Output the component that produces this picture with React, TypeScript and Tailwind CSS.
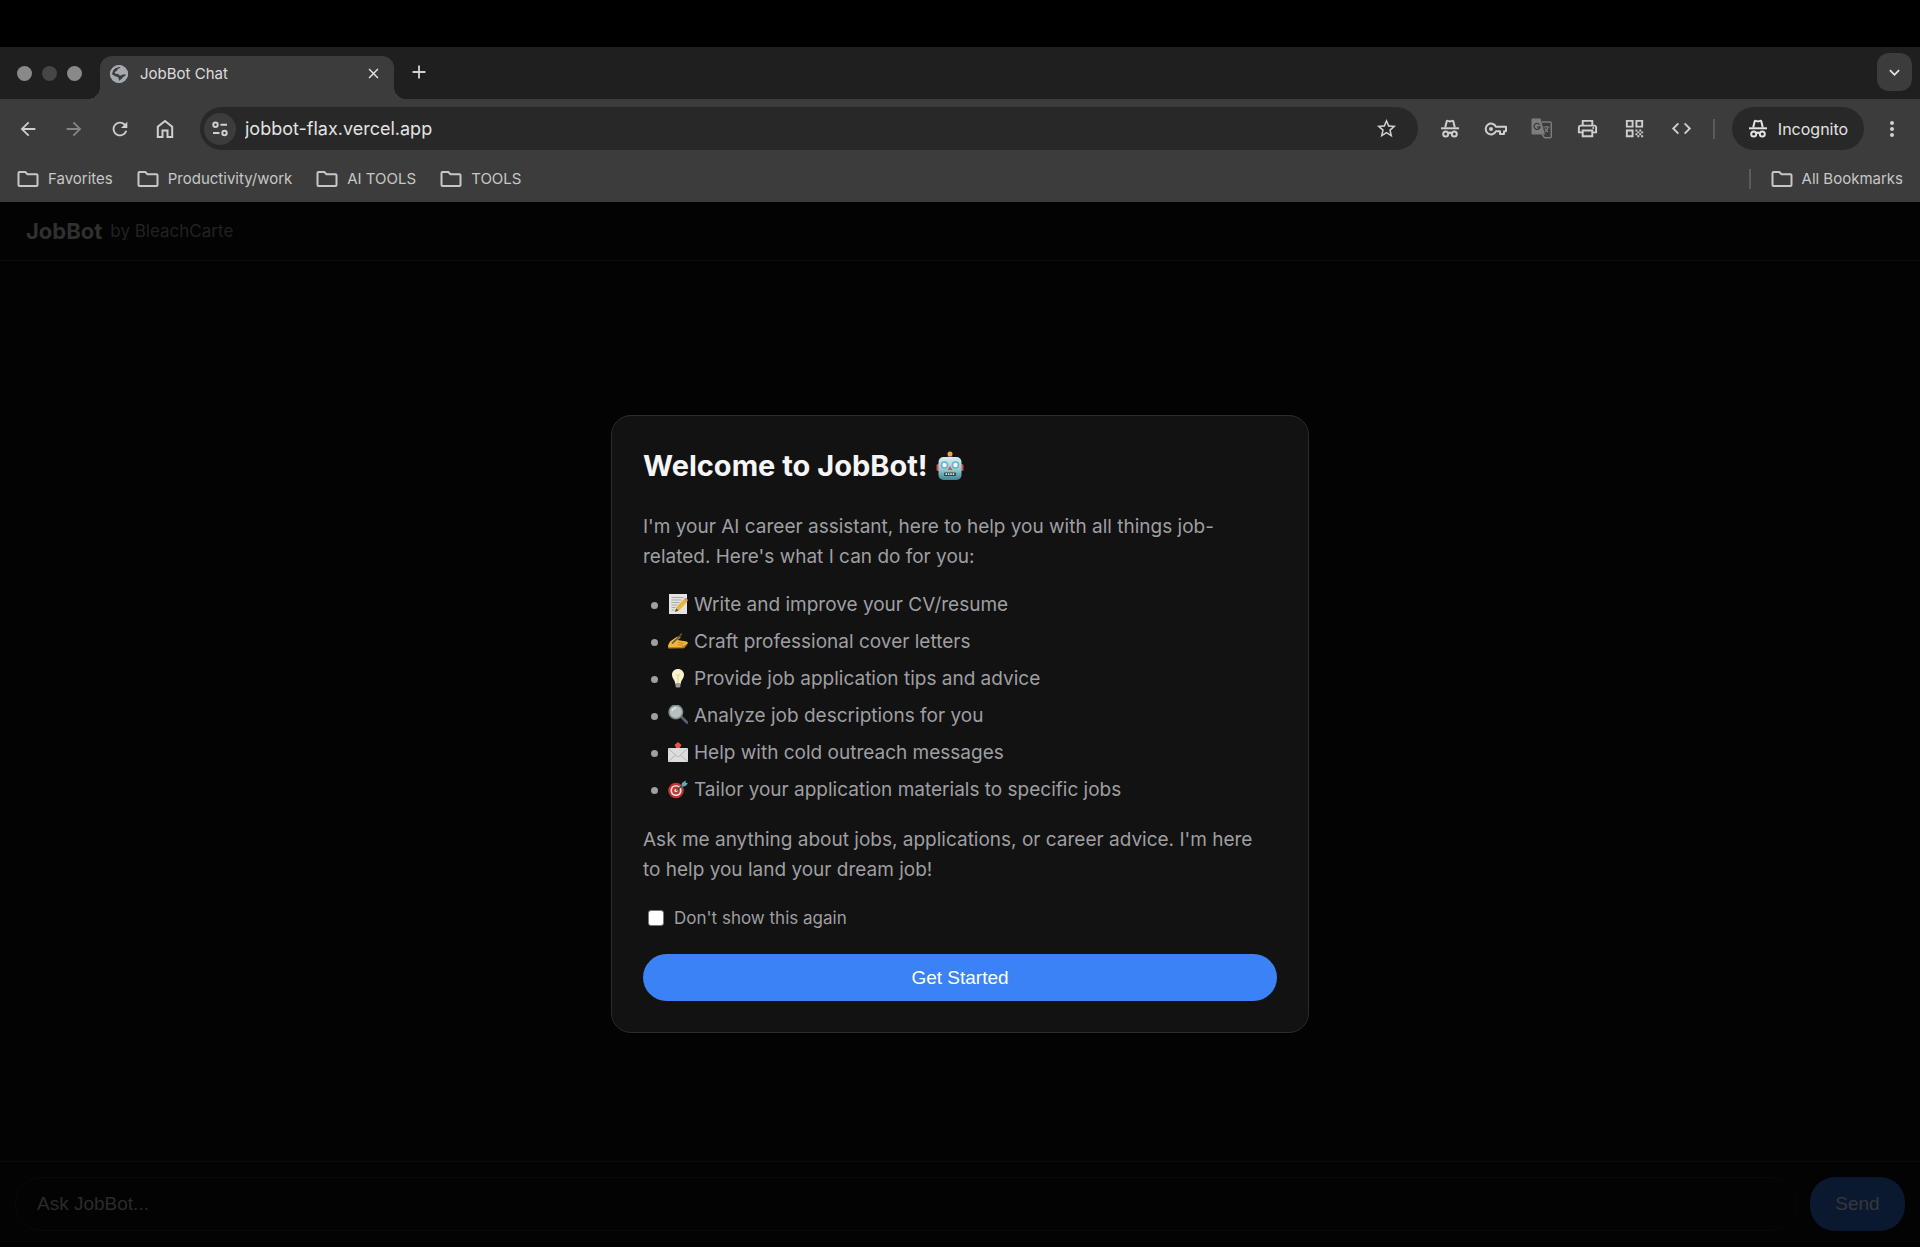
import type { ReactNode } from "react";
import {
  MdArrowBack,
  MdArrowForward,
  MdRefresh,
  MdStarBorder,
  MdOutlinePrint,
  MdQrCode,
  MdCode,
  MdMoreVert,
  MdKeyboardArrowDown,
  MdClose,
  MdAdd,
} from "react-icons/md";

function Folder() {
  return (
    <svg width="22" height="18" viewBox="0 0 22 18" fill="none" stroke="currentColor" strokeWidth="2" strokeLinejoin="round" aria-hidden="true">
      <path d="M1.500 3.200V15c0 .6.400 1 1 1h17c.6 0 1-.4 1-1V5.200c0-.6-.4-1-1-1H10.500L8.300 2H2.500c-.6 0-1 .5-1 1.200z" />
    </svg>
  );
}

function Incognito() {
  return (
    <svg width="20" height="20" viewBox="0 0 20 20" fill="none" stroke="currentColor" strokeWidth="2" aria-hidden="true">
      <path d="M5.200 8.500 6.600 2.700c.2-.7.700-1 1.300-.8l2.100.6 2.100-.6c.6-.2 1.100.1 1.300.8l1.400 5.800" />
      <path d="M1 9.300h18" />
      <circle cx="5.700" cy="15" r="2.500" />
      <circle cx="14.300" cy="15" r="2.500" />
      <path d="M8 14.300c1.200-.8 2.800-.8 4 0" />
    </svg>
  );
}

function Key() {
  return (
    <svg width="23" height="16" viewBox="0 0 23 16" fill="none" stroke="currentColor" strokeWidth="2" strokeLinejoin="round" aria-hidden="true">
      <path d="M12 5.800A5.400 5.400 0 1 0 12 10.200h4V13h4v-2.800h2V5.800z" />
      <circle cx="7" cy="8" r="2" fill="currentColor" stroke="none" />
    </svg>
  );
}

function Translate() {
  return (
    <svg width="21" height="21" viewBox="0 0 21 21" fill="none" aria-hidden="true">
      <path d="M11 4h8c.8 0 1.300.5 1.300 1.300v13.200c0 .8-.5 1.300-1.300 1.300h-5.500L11 16" stroke="currentColor" strokeWidth="1.400" />
      <path d="M1.800.5h7.700l4.500 16H1.800C1 16.500.500 16 .500 15.200V1.800C.500 1 1 .5 1.800.5z" fill="currentColor" />
      <path d="M8.500 6.600A3 3 0 1 0 9 9H6.300" stroke="#3c3c3c" strokeWidth="1.300" />
      <path d="M12.500 9h6M15.500 8v1M17.300 9c-.5 2-2 3.800-3.300 5M14 10.500c.6 1.300 1.700 2.500 3 3.500" stroke="currentColor" strokeWidth="1.200" />
    </svg>
  );
}

function Home() {
  return (
    <svg width="20" height="20" viewBox="0 0 20 20" fill="none" stroke="currentColor" strokeWidth="2" aria-hidden="true">
      <path d="M2.800 18V7.800L10 2l7.200 5.800V18h-4.700v-6.500h-5V18z" />
    </svg>
  );
}

function SiteSettings() {
  return (
    <svg width="18" height="18" viewBox="0 0 18 18" fill="none" stroke="currentColor" strokeWidth="2" aria-hidden="true">
      <circle cx="4.500" cy="4.800" r="2.200" />
      <path d="M9.500 4.800H16M2 13h6.500" />
      <circle cx="13.500" cy="13" r="2.200" />
    </svg>
  );
}

function Globe() {
  return (
    <svg width="18" height="18" viewBox="0 0 18 18" aria-hidden="true">
      <circle cx="9" cy="9" r="9" fill="#a5a9b0" />
      <path d="M10.500 2c-.3 1.800-3 1.200-3.200 2.900 0 1.400-2.600 1.100-2.600 2.700 0 1.300 1.500 1.300 2.900 1.300 1.700 0 1.400 1.700 2.900 1.700 1.200 0 1.200-1.200 2.500-1.200 1.300 0 2.300.2 3 0-.4 1.500-1.500 1.800-2.500 2.300-1.200.6-1 2.100-2.300 2.500-1 .3-1.200 1.200-2.200 1.800.2-1.200-.3-1.800-.4-2.700-.1-1.300-1.500-1.500-2.500-1.800-1.500-.4-2.700-1.500-4.100-2.300C1.900 5.500 5.600 1.500 10.500 2z" fill="#3c3c3c" />
      <circle cx="9" cy="9" r="8" fill="none" stroke="#a5a9b0" strokeWidth="2" />
    </svg>
  );
}

function Robot() {
  return (
    <svg className="inline-block" width="28" height="30" viewBox="0 0 28 30" role="img" aria-label="robot">
      <defs>
        <linearGradient id="robotFace" x1="0" y1="0" x2="0" y2="1">
          <stop offset="0" stopColor="#d8eef0" />
          <stop offset=".55" stopColor="#9cc4ca" />
          <stop offset="1" stopColor="#3d8795" />
        </linearGradient>
      </defs>
      <path d="M11 7c0-2 1.300-3 3-3s3 1 3 3z" fill="#3b3f78" />
      <circle cx="14" cy="3" r="2.500" fill="#f2a53c" />
      <rect x="0.500" y="13" width="4" height="7" rx="1.500" fill="#c9504b" />
      <rect x="23.500" y="13" width="4" height="7" rx="1.500" fill="#c9504b" />
      <rect x="2.500" y="6" width="23" height="23" rx="5" fill="url(#robotFace)" />
      <circle cx="8.500" cy="14" r="3.800" fill="#5bb7d3" />
      <circle cx="19.500" cy="14" r="3.800" fill="#5bb7d3" />
      <circle cx="8.500" cy="14" r="2.200" fill="#f3fbfc" />
      <circle cx="19.500" cy="14" r="2.200" fill="#f3fbfc" />
      <path d="M14 15l2.400 4h-4.800z" fill="#d9534a" />
      <rect x="8" y="21.500" width="12" height="3.500" rx="1" fill="#27444c" />
      <path d="M9.500 23.200h9" stroke="#e6eef0" strokeWidth="1.800" strokeDasharray="1.500 .9" />
    </svg>
  );
}

function Emoji({ label, children }: { label: string; children: ReactNode }) {
  return (
    <svg className="shrink-0" width="20" height="22" viewBox="0 0 20 22" role="img" aria-label={label}>
      {children}
    </svg>
  );
}

const features: { text: string; icon: ReactNode }[] = [
  {
    text: "Write and improve your CV/resume",
    icon: (
      <Emoji label="memo">
        <rect x="1" y="0" width="18" height="20" fill="#e4e4e2" />
        <path d="M3.500 3.500h12M3.500 6h10M3.500 8.500h8M3.500 11h6M3.500 13.500h4M3.500 16h3" stroke="#a9a9a9" />
        <path d="M7 18l1.500-5L16 5l3 3-7.500 8z" fill="#e9b53a" />
        <path d="M16 5l1.500-1.500L20 6l-1 2z" fill="#d98a8a" />
        <path d="M7 18l1.200-3.600 2.300 2.200z" fill="#5a4a35" />
      </Emoji>
    ),
  },
  {
    text: "Craft professional cover letters",
    icon: (
      <Emoji label="writing hand">
        <path d="M0 14.500 2 10.500 8.500 6l3.500-.8.500 1.500L9.500 9l9 1.500c1.500.4 1.700 2 .5 2.800L14.500 16l-14 1z" fill="#f0b73c" />
        <path d="M.5 16h13l6-2.500-3.500 3.800-15.500.2z" fill="#c07f1d" />
        <path d="M4 12.500 11 6l2.800-3.500" stroke="#5d5340" strokeWidth="1.600" fill="none" />
        <path d="M10 11.500l6 .8M9.500 13.800l5.500.3" stroke="#c98a22" />
      </Emoji>
    ),
  },
  {
    text: "Provide job application tips and advice",
    icon: (
      <Emoji label="light bulb">
        <path d="M10 1c3.500 0 6 2.500 6 5.800 0 3.600-3 5.200-3.300 9.200H7.300C7 12 4 10.400 4 6.800 4 3.500 6.500 1 10 1z" fill="#fbf1cf" />
        <path d="M8 6l2 2 2-2M10 8v7" stroke="#e6cf97" fill="none" />
        <rect x="7.500" y="15" width="5" height="4.500" rx="1.500" fill="#9b9b9b" />
      </Emoji>
    ),
  },
  {
    text: "Analyze job descriptions for you",
    icon: (
      <Emoji label="magnifying glass">
        <path d="M12.500 11l6.500 6.500" stroke="#59626b" strokeWidth="2.600" strokeLinecap="round" />
        <circle cx="7.800" cy="7" r="6.800" fill="#b9c0c2" stroke="#7f888c" strokeWidth="1.500" />
        <path d="M4 6c.5-2 2-3 4-3" stroke="#dfe4e5" strokeWidth="1.400" fill="none" />
      </Emoji>
    ),
  },
  {
    text: "Help with cold outreach messages",
    icon: (
      <Emoji label="outbox envelope">
        <path d="M10 0l3.500 3-1.500 2.500v1.500H8V5.500L6.500 3z" fill="#e0574f" />
        <rect x="0" y="6" width="20" height="14" rx="1" fill="#dddde0" />
        <path d="M.5 6.500l8 7.500c1 .8 2 .8 3 0l8-7.500M.5 19.500l7-6.500M19.500 19.500l-7-6.500" stroke="#b4b4b9" fill="none" />
      </Emoji>
    ),
  },
  {
    text: "Tailor your application materials to specific jobs",
    icon: (
      <Emoji label="direct hit">
        <circle cx="8" cy="11.500" r="7.800" fill="#c9322e" />
        <circle cx="8" cy="11.500" r="5.600" fill="#ece6e4" />
        <circle cx="8" cy="11.500" r="3.900" fill="#c9322e" />
        <circle cx="8" cy="11.500" r="1.700" fill="#ece6e4" />
        <path d="M8 11.500l8-6" stroke="#33515c" strokeWidth="1.500" />
        <path d="M13.500 6.500 14 4l3.500-2.500.3 2.200 2.200.5-2.500 2.800-3 .8z" fill="#5fa9bd" />
      </Emoji>
    ),
  },
];

function Bookmark({ label }: { label: string }) {
  return (
    <a href="#" className="flex items-center gap-[9px] text-[#c7c7c7]">
      <Folder />
      <span className="text-[15px] leading-5">{label}</span>
    </a>
  );
}

function TabStrip() {
  return (
    <div className="flex h-[52px] items-end bg-[#1f1f1f] pr-2">
      <div className="flex h-[52px] w-[88px] shrink-0 items-center gap-2.5 pl-[17px]">
        <span className="size-[15px] rounded-full bg-[#89898b]" />
        <span className="size-[15px] rounded-full bg-[#464646]" />
        <span className="size-[15px] rounded-full bg-[#89898b]" />
      </div>
      <span className="size-3 shrink-0 bg-[radial-gradient(circle_at_0_0,transparent_12px,#3c3c3c_12px)]" />
      <div role="tab" aria-selected="true" className="flex h-[43px] w-[294px] items-center rounded-t-xl bg-[#3c3c3c] pr-3 pb-2 pl-2.5">
        <Globe />
        <span className="ml-3 flex-1 text-[15px] leading-5 text-[#dcdcdc]">JobBot Chat</span>
        <button aria-label="Close tab" className="text-[#e4e4e4]">
          <MdClose size={17} />
        </button>
      </div>
      <span className="size-3 shrink-0 bg-[radial-gradient(circle_at_100%_0,transparent_12px,#3c3c3c_12px)]" />
      <button aria-label="New tab" className="mb-4 ml-0.5 text-[#d2d2d2]">
        <MdAdd size={22} />
      </button>
      <button aria-label="Search tabs" className="mb-2 ml-auto flex h-[38px] w-[35px] items-center justify-center rounded-xl bg-[#3c3c3c] text-[#e4e4e4]">
        <MdKeyboardArrowDown size={21} />
      </button>
    </div>
  );
}

function Toolbar() {
  return (
    <div className="flex h-[59px] items-center pr-4 pl-[17px] text-[#cfcfcf]">
      <div className="flex w-[183px] shrink-0 items-center gap-6">
        <button aria-label="Back"><MdArrowBack size={22} /></button>
        <button aria-label="Forward" className="text-[#858585]"><MdArrowForward size={22} /></button>
        <button aria-label="Reload"><MdRefresh size={22} /></button>
        <button aria-label="Home"><Home /></button>
      </div>
      <div className="flex h-[43px] flex-1 items-center rounded-full bg-[#282828] pr-5 pl-1">
        <button aria-label="Site information" className="flex size-8 items-center justify-center rounded-full bg-[#3c3c3c]">
          <SiteSettings />
        </button>
        <input aria-label="Address" defaultValue="jobbot-flax.vercel.app" className="ml-[9px] min-w-0 flex-1 bg-transparent text-lg leading-6 text-[#e3e3e3] outline-none" />
        <button aria-label="Bookmark this page"><MdStarBorder size={23} /></button>
      </div>
      <div className="ml-[22px] flex shrink-0 items-center gap-6">
        <button aria-label="Incognito tools"><Incognito /></button>
        <button aria-label="Passwords"><Key /></button>
        <button aria-label="Translate" className="text-[#7d7d7d]"><Translate /></button>
        <button aria-label="Print"><MdOutlinePrint size={23} /></button>
        <button aria-label="QR code"><MdQrCode size={23} /></button>
        <button aria-label="Developer tools"><MdCode size={23} /></button>
      </div>
      <span className="ml-5 h-5 w-0.5 bg-[#5b5b5b]" />
      <button className="ml-[17px] flex h-[43px] w-[132px] items-center justify-center gap-2.5 rounded-full bg-[#282828] text-[#e3e3e3]">
        <Incognito />
        <span className="text-base leading-5">Incognito</span>
      </button>
      <button aria-label="Menu" className="ml-4"><MdMoreVert size={24} /></button>
    </div>
  );
}

function WelcomeDialog() {
  return (
    <section role="dialog" aria-labelledby="welcome-title" className="w-[698px] max-w-full rounded-[20px] border border-[#2c2c2c] bg-[#121212] px-[31px] pt-[30px] pb-[31px] text-[19px] leading-[30px] text-[#9f9fa2]">
      <h1 id="welcome-title" className="flex items-center gap-2 text-[29px] leading-10 font-bold text-[#f5f5f6]">
        Welcome to JobBot! <Robot />
      </h1>
      <p className="mt-[26px] pr-2">I'm your AI career assistant, here to help you with all things job-related. Here's what I can do for you:</p>
      <ul className="mt-[18px] flex flex-col gap-[7px]">
        {features.map((f) => (
          <li key={f.text} className="flex items-center gap-1.5">
            <span className="mr-1 ml-2 size-[7px] rounded-full bg-[#9f9fa2]" />
            {f.icon}
            <span>{f.text}</span>
          </li>
        ))}
      </ul>
      <p className="mt-5 pr-2">Ask me anything about jobs, applications, or career advice. I'm here to help you land your dream job!</p>
      <label className="mt-[18px] flex items-center gap-2.5 text-[17px]">
        <input type="checkbox" className="ml-[5px] size-4 appearance-none rounded-[3px] border border-[#767676] bg-white" />
        Don't show this again
      </label>
      <button className="mt-[21px] h-[47px] w-full rounded-full bg-[#3b82f6] font-['Liberation_Sans',Arial,sans-serif] text-white">Get Started</button>
    </section>
  );
}

export default function App() {
  return (
    <div className="flex min-h-screen flex-col bg-black pt-[47px] pb-[5px] font-['Inter',sans-serif]">
      <TabStrip />
      <header className="bg-[#3c3c3c]">
        <Toolbar />
        <nav aria-label="Bookmarks" className="flex h-11 items-start gap-6 px-[17px] pt-[11px]">
          <Bookmark label="Favorites" />
          <Bookmark label="Productivity/work" />
          <Bookmark label="AI TOOLS" />
          <Bookmark label="TOOLS" />
          <div className="ml-auto flex items-center gap-5">
            <span className="h-5 w-0.5 bg-[#5b5b5b]" />
            <Bookmark label="All Bookmarks" />
          </div>
        </nav>
      </header>
      <main className="relative flex min-h-[680px] flex-1 flex-col bg-[#030303]">
        <div className="flex h-[59px] items-center gap-2 border-b border-[#0c0c0c] px-[26px]">
          <span className="text-[22px] leading-7 font-bold text-[#303030]">JobBot</span>
          <span className="text-[17px] leading-7 text-[#222222]">by BleachCarte</span>
        </div>
        <form className="mt-auto flex h-[81px] items-center gap-[13px] border-t border-[#0c0c0c] px-[15px] pt-1 font-['Liberation_Sans',Arial,sans-serif] text-[19px]">
          <input aria-label="Message" placeholder="Ask JobBot..." className="h-[54px] min-w-0 flex-1 rounded-full border border-[#090909] bg-transparent px-[21px] text-[#2b2b2b] outline-none placeholder:text-[#2b2b2b]" />
          <button type="button" className="h-[54px] w-[95px] rounded-[25px] bg-[#0b1930] text-[#363739]">Send</button>
        </form>
        <div className="absolute inset-0 flex items-center justify-center px-4 pt-1">
          <WelcomeDialog />
        </div>
      </main>
    </div>
  );
}
